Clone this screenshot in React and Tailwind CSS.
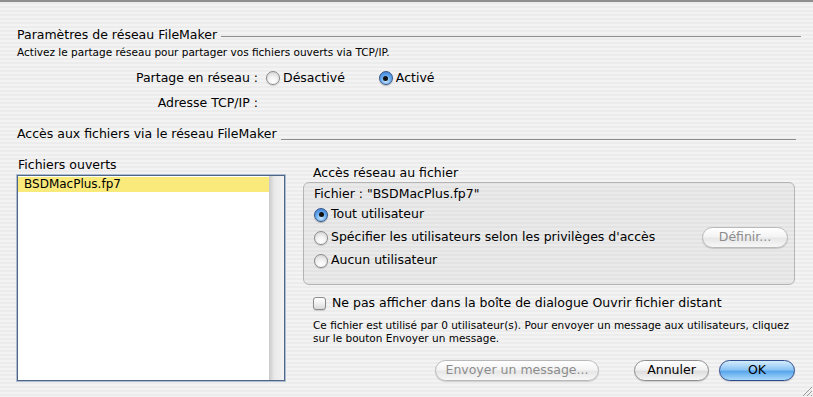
import React from "react";

const font = "font-['Lucida_Grande','DejaVu_Sans',sans-serif]";

function Radio({ checked }) {
    if (checked) {
        return (
            <span className="flex h-[14px] w-[14px] shrink-0 items-center justify-center rounded-full border border-[#35578a] bg-[radial-gradient(circle_at_50%_75%,#c9e6fd_0%,#6eaef0_45%,#2f74cf_100%)] shadow-[0_1px_1px_rgba(0,0,0,0.25)]">
                <span className="h-[5px] w-[5px] rounded-full bg-[#111]" />
            </span>
        );
    }
    return (
        <span className="block h-[14px] w-[14px] shrink-0 rounded-full border border-[#8b8b8b] bg-[radial-gradient(circle_at_50%_80%,#ffffff_0%,#f1f1f1_45%,#cdcdcd_100%)] shadow-[0_1px_1px_rgba(0,0,0,0.15)]" />
    );
}

function AquaButton({ children, width, disabled, primary }) {
    let cls = "border-[#8e8e8e] bg-[linear-gradient(#ffffff,#f1f1f1_45%,#dedede_55%,#f6f6f6)] text-black";
    if (disabled) cls = "border-[#b9b9b9] bg-[linear-gradient(#ffffff,#f4f4f4_45%,#e7e7e7_55%,#f7f7f7)] text-[#8c8c8c]";
    if (primary) cls = "border-[#2f4a8a] bg-[linear-gradient(#d3ecfd,#8ec6f5_45%,#5aa6ec_55%,#a9dafb)] text-black";
    return (
        <div className={`flex h-[21px] ${width} items-center justify-center rounded-full border text-[12.5px] shadow-[0_1px_1px_rgba(0,0,0,0.15)] ${cls}`}>
            {children}
        </div>
    );
}

export default function App() {
    return (
        <div className={`relative h-[397px] w-[813px] overflow-hidden border-t-2 border-[#8f8f8f] bg-[repeating-linear-gradient(180deg,#ececec_0px,#ececec_2px,#f3f3f3_2px,#f3f3f3_4px)] text-black ${font}`}>
            {/* Paramètres */}
            <div className="mt-[25px] flex items-center pl-[17px] pr-[12px]">
                <span className="text-[12.5px] leading-[16px]">Paramètres de réseau FileMaker</span>
                <div className="ml-[4px] mt-[2px] h-px flex-1 bg-[#8d8d8d]" />
            </div>
            <div className="mt-[2px] pl-[17px] text-[10.5px] leading-[14px]">
                Activez le partage réseau pour partager vos fichiers ouverts via TCP/IP.
            </div>
            <div className="mt-[10px] flex h-[18px] items-center text-[12.5px]">
                <span className="w-[258px] text-right">Partage en réseau :</span>
                <span className="ml-[8px] flex"><Radio /></span>
                <span className="ml-[3px]">Désactivé</span>
                <span className="ml-[34px] flex"><Radio checked /></span>
                <span className="ml-[3px]">Activé</span>
            </div>
            <div className="mt-[7px] flex h-[18px] items-center text-[12.5px]">
                <span className="w-[258px] text-right">Adresse TCP/IP :</span>
            </div>

            {/* Accès aux fichiers */}
            <div className="mt-[14px] flex h-[16px] items-center pl-[17px] pr-[17px]">
                <span className="text-[12.5px] leading-[16px]">Accès aux fichiers via le réseau FileMaker</span>
                <div className="ml-[4px] mt-[10px] h-px flex-1 bg-[#8d8d8d]" />
            </div>

            <div className="mt-[15px] flex items-start">
                <div className="ml-[17px] w-[268px]">
                    <div className="pl-[1px] text-[12.5px] leading-[16px]">Fichiers ouverts</div>
                    <div className="mt-[2px] flex h-[206px] border border-[#4f6688] bg-white shadow-[0_0_0_1px_#aebccf]">
                        <div className="flex-1 pt-[1px]">
                            <div className="h-[15px] bg-[#fae97b] pl-[6px] text-[12px] leading-[15px]">BSDMacPlus.fp7</div>
                        </div>
                        <div className="w-[15px] bg-[linear-gradient(to_right,#c9c9c9,#e9e9e9_35%,#f3f3f3)]" />
                    </div>
                </div>

                <div className="ml-[18px] mt-[8px] w-[492px]">
                    <div className="pl-[10px] text-[12.5px] leading-[16px]">Accès réseau au fichier</div>
                    <div className="mt-[1px] h-[103px] rounded-[6px] border border-[#b4b4b4] bg-[rgba(0,0,0,0.035)] pl-[10px] pr-[6px] pt-[3px] text-[12.5px]">
                        <div className="h-[16px] leading-[16px]">Fichier : "BSDMacPlus.fp7"</div>
                        <div className="mt-[1px] flex h-[23px] items-center">
                            <Radio checked />
                            <span className="ml-[3px]">Tout utilisateur</span>
                        </div>
                        <div className="flex h-[23px] items-center">
                            <Radio />
                            <span className="ml-[3px]">Spécifier les utilisateurs selon les privilèges d'accès</span>
                            <div className="ml-auto">
                                <AquaButton width="w-[86px]" disabled>Définir...</AquaButton>
                            </div>
                        </div>
                        <div className="flex h-[23px] items-center">
                            <Radio />
                            <span className="ml-[3px]">Aucun utilisateur</span>
                        </div>
                    </div>

                    <div className="mt-[10px] flex h-[16px] items-center pl-[10px] text-[12.5px]">
                        <span className="block h-[13px] w-[13px] rounded-[3px] border border-[#8b8b8b] bg-[linear-gradient(#ffffff,#f0f0f0_50%,#d9d9d9)] shadow-[0_1px_1px_rgba(0,0,0,0.15)]" />
                        <span className="ml-[6px]">Ne pas afficher dans la boîte de dialogue Ouvrir fichier distant</span>
                    </div>
                    <div className="mt-[8px] pl-[10px] text-[10.5px] leading-[13px]">
                        Ce fichier est utilisé par 0 utilisateur(s). Pour envoyer un message aux utilisateurs, cliquez
                        <br />
                        sur le bouton Envoyer un message.
                    </div>

                    <div className="mt-[15px] flex items-center justify-end">
                        <AquaButton width="w-[164px]" disabled>Envoyer un message...</AquaButton>
                        <div className="ml-[35px]">
                            <AquaButton width="w-[75px]">Annuler</AquaButton>
                        </div>
                        <div className="ml-[10px]">
                            <AquaButton width="w-[76px]" primary>OK</AquaButton>
                        </div>
                    </div>
                </div>
            </div>

            {/* resize grip */}
            <svg className="absolute bottom-0 right-0" width="12" height="12" viewBox="0 0 12 12">
                <path d="M11 2 L2 11 M11 6 L6 11 M11 10 L10 11" stroke="#9a9a9a" strokeWidth="1" />
            </svg>
        </div>
    );
}
